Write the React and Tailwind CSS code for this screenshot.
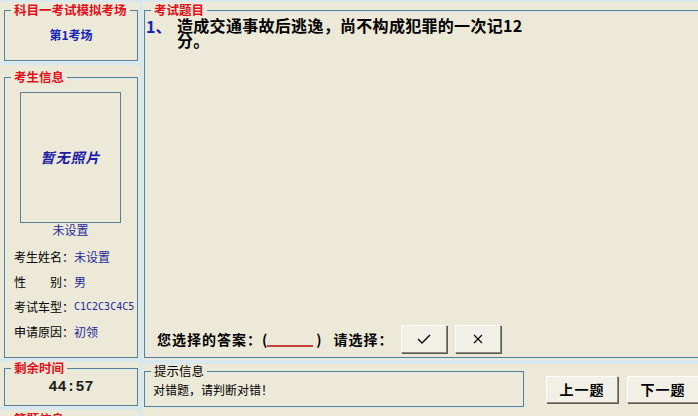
import { useState } from "react";

const CJK = "font-['Noto_Sans_CJK_SC','Noto_Sans',sans-serif]";

function GroupBox({ title, titleClass = "text-[#e0101c] font-bold", className = "", children }) {
  return (
    <div
      className={`relative border border-[#587f92] shadow-[inset_1px_1px_0_#d9ecf4,1px_1px_0_#d9ecf4] ${className}`}>
      <span
        className={`absolute -top-[8px] left-[6px] px-[3px] bg-[#ece9d8] text-[12.5px] leading-[14px] ${titleClass}`}>
        {title}
      </span>
      {children}
    </div>
  );
}

function WinButton({ className = "", children, onClick }) {
  return (
    <button
      onClick={onClick}
      className={`flex items-center justify-center bg-[#f1efe6] border border-t-white border-l-white border-r-[#8d8a7c] border-b-[#8d8a7c] shadow-[1px_1px_0_#5e5c52] ${className}`}>
      {children}
    </button>
  );
}

function InfoRow({ label, value, valueClass = "" }) {
  return (
    <div className="h-[25px] flex items-center pl-[9px] text-[12px]">
      <span className="text-black">{label}</span>
      <span className={`text-[#1f2a9c] ${valueClass}`}>{value}</span>
    </div>
  );
}

export default function App() {
  const [answer, setAnswer] = useState("");

  return (
    <div
      className={`w-[698px] h-[416px] overflow-hidden bg-[#d9e8ef] flex gap-[4px] pt-[2px] ${CJK}`}>
      {/* left column */}
      <div className="w-[139px] shrink-0 flex flex-col gap-[4px]">
        <div className="bg-[#ece9d8] h-[60px] pt-[8px] pl-[4px] pr-[1px]">
          <GroupBox title="科目一考试模拟考场" className="h-[51px]">
            <div className="h-full flex items-center justify-center pb-[2px] text-[12px] font-bold text-[#1424b4]">
              第1考场
            </div>
          </GroupBox>
        </div>

        <div className="bg-[#ece9d8] h-[294px] pt-[12px] pl-[4px] pr-[1px]">
          <GroupBox title="考生信息" className="h-[281px]">
            <div className="pt-[14px]">
              <div className="ml-[15px] w-[101px] h-[131px] border border-[#587f92] flex items-center justify-center">
                <span className="italic font-bold text-[14px] text-[#1c1ca8] tracking-[1px]">暂无照片</span>
              </div>
              <div className="w-[131px] text-center text-[12px] leading-[14px] text-[#1f2a9c] mb-[7px]">
                未设置
              </div>
              <InfoRow label="考生姓名：" value="未设置" />
              <InfoRow label="性　　别：" value="男" />
              <InfoRow
                label="考试车型："
                value="C1C2C3C4C5"
                valueClass="font-['DejaVu_Sans_Mono',monospace] text-[10px]"
              />
              <InfoRow label="申请原因：" value="初领" />
            </div>
          </GroupBox>
        </div>

        <div className="bg-[#ece9d8] h-[45px] pt-[6px] pl-[4px] pr-[1px]">
          <GroupBox title="剩余时间" className="h-[38px]">
            <div className="h-full flex items-center justify-center pt-[3px] font-['Liberation_Mono',monospace] font-bold text-[15px] text-[#202020]">
              44:57
            </div>
          </GroupBox>
        </div>

        <div className="bg-[#ece9d8] flex-1 pt-[9px] pl-[4px] pr-[1px]">
          <GroupBox title="答题信息" className="h-[40px]" />
        </div>
      </div>

      {/* right column */}
      <div className="flex-1 flex flex-col gap-[4px]">
        <div className="bg-[#ece9d8] h-[358px] pt-[8px] pl-[1px]">
          <GroupBox title="考试题目" className="h-[348px] w-[580px] flex flex-col">
            <div className="flex pt-[7px] pl-[1px]">
              <span className="w-[31px] shrink-0 text-[16px] leading-[16px] font-bold text-[#1424b4]">1、</span>
              <p className="w-[352px] text-[16px] leading-[15px] font-bold text-black tracking-[0.3px]">
                造成交通事故后逃逸，尚不构成犯罪的一次记12分。
              </p>
            </div>
            <div className="mt-auto flex items-center pl-[12px] pb-[4px] text-[14px] font-bold text-black">
              <span className="tracking-[1px]">您选择的答案：</span>
              <span>(</span>
              <span className="w-[46px] h-[16px] border-b-2 border-[#c8403c] text-center text-[#c8403c]">
                {answer}
              </span>
              <span className="ml-[3px]">)</span>
              <span className="ml-[12px] tracking-[1px]">请选择：</span>
              <WinButton className="ml-[7px] w-[46px] h-[28px]" onClick={() => setAnswer("√")}>
                <svg width="14" height="10" viewBox="0 0 14 10">
                  <path d="M1 5 L5 9 L13 1" fill="none" stroke="#000" strokeWidth="1.4" />
                </svg>
              </WinButton>
              <WinButton className="ml-[8px] w-[46px] h-[28px]" onClick={() => setAnswer("×")}>
                <svg width="10" height="10" viewBox="0 0 10 10">
                  <path d="M1 1 L9 9 M9 1 L1 9" fill="none" stroke="#000" strokeWidth="1.1" />
                </svg>
              </WinButton>
            </div>
          </GroupBox>
        </div>

        <div className="bg-[#ece9d8] flex-1 flex pl-[1px]">
          <div className="pt-[7px]">
            <GroupBox
              title="提示信息"
              titleClass="text-black font-normal"
              className="w-[380px] h-[36px]">
              <div className="h-full flex items-center pl-[8px] pt-[2px] text-[12px] text-black">
                对错题，请判断对错！
              </div>
            </GroupBox>
          </div>
          <div className="flex gap-[9px] pt-[12px] ml-[22px]">
            <WinButton className="w-[72px] h-[27px] text-[14px] font-bold tracking-[1px]">上一题</WinButton>
            <WinButton className="w-[72px] h-[27px] text-[14px] font-bold tracking-[1px]">下一题</WinButton>
          </div>
        </div>
      </div>
    </div>
  );
}
